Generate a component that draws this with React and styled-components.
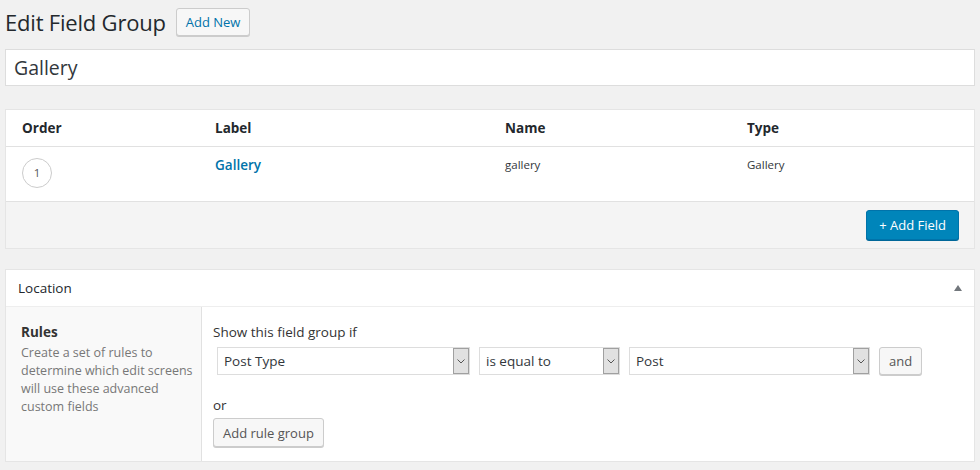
import React from 'react';
import styled, { createGlobalStyle } from 'styled-components';

const GlobalStyle = createGlobalStyle`
  body {
    margin: 0;
    background: #f1f1f1;
    font-family: "Open Sans", "Noto Sans", sans-serif;
    color: #23282d;
  }
`;

const Wrap = styled.div`
  padding: 6px 5px 0 5px;
  width: 970px;
`;

const HeadRow = styled.div`
  display: flex;
  align-items: center;
  gap: 10px;
  height: 32px;
`;

const Title = styled.h1`
  margin: 0;
  font-size: 22px;
  font-weight: 400;
  line-height: 29px;
  letter-spacing: -0.2px;
`;

const Button = styled.button`
  font-family: inherit;
  font-size: ${p => p.$size || 13}px;
  height: ${p => p.$h || 28}px;
  padding: 0 ${p => p.$px || 10}px;
  margin-top: ${p => p.$mt || 0}px;
  border-radius: 3px;
  cursor: pointer;
  background: ${p => (p.$primary ? '#0085ba' : '#f7f7f7')};
  border: 1px solid ${p => (p.$primary ? '#0073aa' : '#ccc')};
  box-shadow: 0 1px 0 ${p => (p.$primary ? '#006799' : '#ccc')};
  color: ${p => (p.$primary ? '#fff' : p.$link ? '#0073aa' : '#555')};
  white-space: nowrap;
`;

const TitleInput = styled.div`
  margin-top: 11px;
  height: 35px;
  background: #fff;
  border: 1px solid #ddd;
  font-size: 19.5px;
  line-height: 35px;
  padding: 0 8px;
  color: #32373c;
`;

const Box = styled.div`
  margin-top: ${p => p.$mt}px;
  background: #fff;
  border: 1px solid #e5e5e5;
`;

const Grid = styled.div`
  display: grid;
  grid-template-columns: 193px 290px 242px 1fr;
  border-bottom: 1px solid #e1e1e1;
  height: ${p => p.$h}px;
  align-items: ${p => (p.$top ? 'start' : 'center')};
`;

const HeadCell = styled.div`
  padding-left: 16px;
  font-size: 13.5px;
  font-weight: 700;
`;

const Cell = styled.div`
  padding-left: 16px;
  padding-top: ${p => p.$pt || 0}px;
  font-size: ${p => p.$size || 11.5}px;
  font-weight: ${p => p.$bold ? 600 : 400};
  color: ${p => p.$link ? '#0073aa' : '#32373c'};
  line-height: 20px;
`;

const OrderBadge = styled.span`
  display: inline-flex;
  align-items: center;
  justify-content: center;
  width: 28px;
  height: 28px;
  border: 1px solid #ccc;
  border-radius: 50%;
  font-size: 11.5px;
  color: #555;
`;

const Footer = styled.div`
  background: #f4f4f4;
  height: 46px;
  display: flex;
  justify-content: flex-end;
  align-items: flex-start;
  padding: 8px 15px 0 0;
  box-sizing: border-box;
`;

const BoxHead = styled.div`
  height: 36px;
  border-bottom: 1px solid #eee;
  display: flex;
  align-items: center;
  justify-content: space-between;
  padding: 0 12px;
  font-size: 13.5px;
  font-weight: 400;
  color: #23282d;
`;

const Caret = styled.span`
  width: 0;
  height: 0;
  border-left: 4px solid transparent;
  border-right: 4px solid transparent;
  border-bottom: 6px solid #72777c;
`;

const BoxBody = styled.div`
  display: flex;
  height: 154px;
`;

const Side = styled.div`
  width: 180px;
  padding: 16px 0 0 15px;
  background: #f9f9f9;
  border-right: 1px solid #e1e1e1;
  font-size: 12.5px;
  color: #777;
  line-height: 18px;
`;

const SideTitle = styled.div`
  font-size: 13.5px;
  font-weight: 700;
  color: #333;
  margin-bottom: 3px;
`;

const Main = styled.div`
  flex: 1;
  padding: 16px 11px 0 11px;
  font-size: 13.5px;
  color: #333;
`;

const RuleRow = styled.div`
  display: flex;
  gap: 9px;
  margin: 6px 0 0 4px;
`;

const Select = styled.div`
  width: ${p => p.$w}px;
  height: 28px;
  box-sizing: border-box;
  border: 1px solid #ddd;
  background: #fff;
  display: flex;
  align-items: center;
  justify-content: space-between;
  padding-left: 6px;
  font-size: 13.5px;
  color: #32373c;
`;

const Arrow = styled.span`
  width: 16px;
  height: 100%;
  box-sizing: border-box;
  background: #e1e1e1;
  border: 1px solid #a0a0a0;
  display: flex;
  align-items: center;
  justify-content: center;
`;

const Or = styled.div`
  margin-top: 20px;
  line-height: 20px;
`;

const Chevron = () => (
  <svg width="8" height="5" viewBox="0 0 8 5">
    <path d="M0.5 0.5 L4 4 L7.5 0.5" fill="none" stroke="#555" strokeWidth="1" />
  </svg>
);

const Sel = ({ w, children }) => (
  <Select $w={w}>
    {children}
    <Arrow><Chevron /></Arrow>
  </Select>
);

export default function App() {
  return (
    <Wrap>
      <GlobalStyle />
      <HeadRow>
        <Title>Edit Field Group</Title>
        <Button $link $h={28} $px={9}>Add New</Button>
      </HeadRow>
      <TitleInput>Gallery</TitleInput>

      <Box $mt={23}>
        <Grid $h={36}>
          <HeadCell>Order</HeadCell>
          <HeadCell>Label</HeadCell>
          <HeadCell>Name</HeadCell>
          <HeadCell>Type</HeadCell>
        </Grid>
        <Grid $h={54} $top>
          <Cell $pt={11}><OrderBadge>1</OrderBadge></Cell>
          <Cell $pt={8} $size={13.5} $bold $link>Gallery</Cell>
          <Cell $pt={8}>gallery</Cell>
          <Cell $pt={8}>Gallery</Cell>
        </Grid>
        <Footer>
          <Button $primary $h={30} $px={12}>+ Add Field</Button>
        </Footer>
      </Box>

      <Box $mt={20}>
        <BoxHead>
          <span>Location</span>
          <Caret />
        </BoxHead>
        <BoxBody>
          <Side>
            <SideTitle>Rules</SideTitle>
            Create a set of rules to determine which edit screens will use these advanced custom fields
          </Side>
          <Main>
            <div>Show this field group if</div>
            <RuleRow>
              <Sel w={253}>Post Type</Sel>
              <Sel w={141}>is equal to</Sel>
              <Sel w={241}>Post</Sel>
              <Button $h={28} $px={9}>and</Button>
            </RuleRow>
            <Or>or</Or>
            <Button $h={29} $px={9} $mt={3}>Add rule group</Button>
          </Main>
        </BoxBody>
      </Box>
    </Wrap>
  );
}
